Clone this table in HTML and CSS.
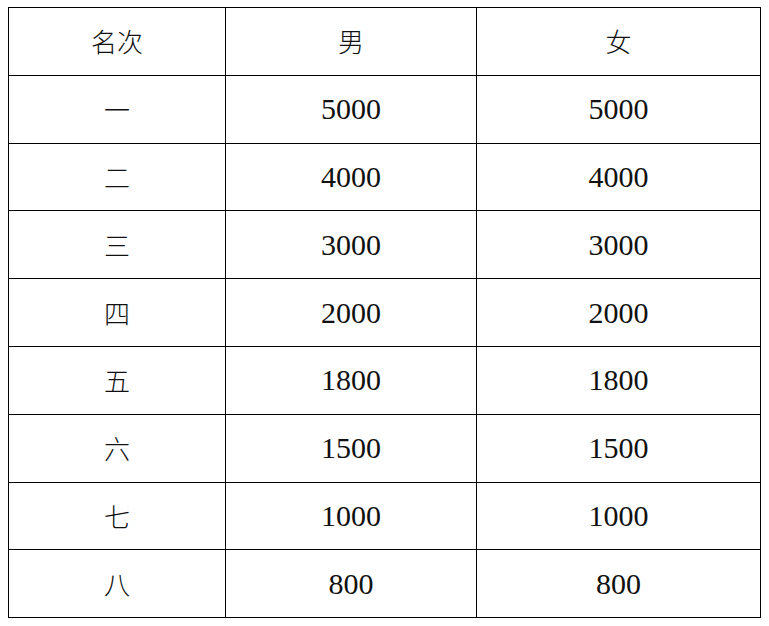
FILE: index.html
```html
<!DOCTYPE html>
<html lang="zh">
<head>
<meta charset="utf-8">
<title>名次奖金</title>
<link rel="stylesheet" href="styles.css">
</head>
<body>
<table class="prize">
  <colgroup>
    <col class="c1">
    <col class="c2">
    <col class="c3">
  </colgroup>
  <tr><td class="cjk">名次</td><td class="cjk">男</td><td class="cjk">女</td></tr>
  <tr><td class="cjk">一</td><td>5000</td><td>5000</td></tr>
  <tr><td class="cjk">二</td><td>4000</td><td>4000</td></tr>
  <tr><td class="cjk">三</td><td>3000</td><td>3000</td></tr>
  <tr><td class="cjk">四</td><td>2000</td><td>2000</td></tr>
  <tr><td class="cjk">五</td><td>1800</td><td>1800</td></tr>
  <tr><td class="cjk">六</td><td>1500</td><td>1500</td></tr>
  <tr><td class="cjk">七</td><td>1000</td><td>1000</td></tr>
  <tr><td class="cjk">八</td><td>800</td><td>800</td></tr>
</table>
</body>
</html>
```
FILE: styles.css
```css
html, body {
  background: #ffffff;
}
body {
  margin: 7px 8px;
}
.prize {
  border-collapse: collapse;
  table-layout: fixed;
  width: 753px;
  color: #111;
}
.c1 { width: 217px; }
.c2 { width: 251px; }
.c3 { width: auto; }
.prize td {
  border: 1px solid #000;
  height: 66.8px;
  padding: 0;
  text-align: center;
  vertical-align: middle;
  font-family: "Liberation Serif", "Noto Sans CJK SC", serif;
  font-size: 30px;
  line-height: 1;
}
.prize td.cjk {
  font-family: "Noto Sans CJK SC", sans-serif;
  font-weight: 300;
  font-size: 26px;
}
```
